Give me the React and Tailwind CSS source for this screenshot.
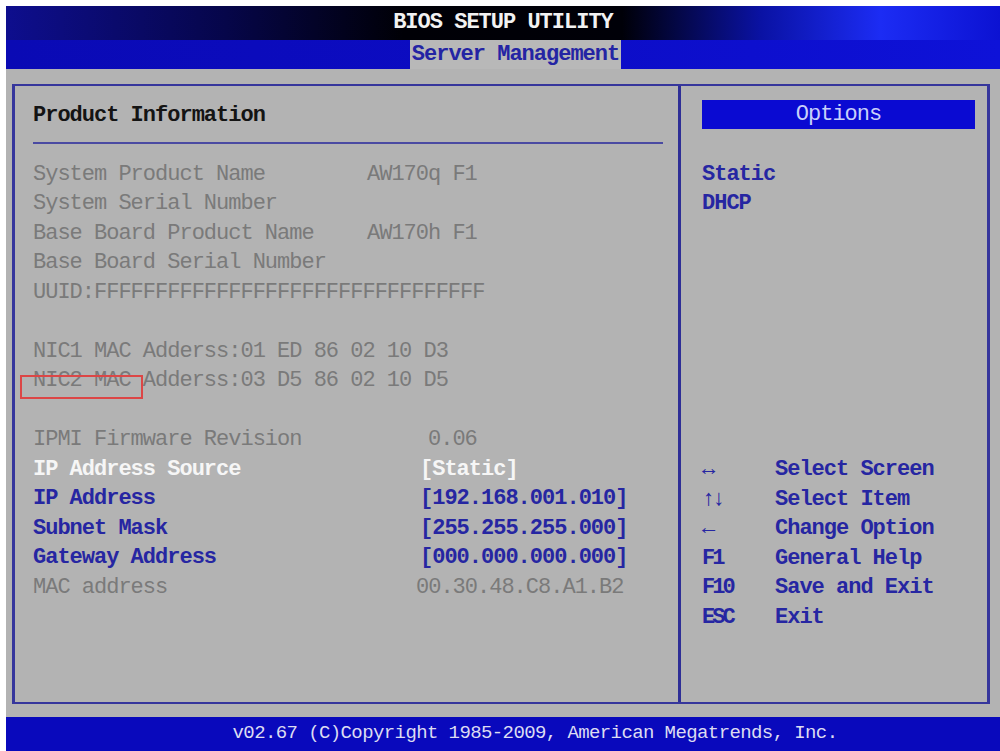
import React from "react";

const mono = { fontFamily: '"Liberation Mono", "DejaVu Sans Mono", monospace' };

const infoRows = [
  { label: "System Product Name", value: "AW170q F1" },
  { label: "System Serial Number", value: "" },
  { label: "Base Board Product Name", value: "AW170h F1" },
  { label: "Base Board Serial Number", value: "" },
  { label: "UUID:FFFFFFFFFFFFFFFFFFFFFFFFFFFFFFFF", value: "" },
];

const ipmiRows = [
  { label: "IPMI Firmware Revision", value: "0.06", tone: "gray", shift: "pl-[8px]" },
  { label: "IP Address Source", value: "[Static]", tone: "white" },
  { label: "IP Address", value: "[192.168.001.010]", tone: "blue" },
  { label: "Subnet Mask", value: "[255.255.255.000]", tone: "blue" },
  { label: "Gateway Address", value: "[000.000.000.000]", tone: "blue" },
  { label: "MAC address", value: "00.30.48.C8.A1.B2", tone: "gray", shift: "-ml-[4px]" },
];

const helpRows = [
  { key: "↔", desc: "Select Screen" },
  { key: "↑↓", desc: "Select Item" },
  { key: "←", desc: "Change Option" },
  { key: "F1", desc: "General Help" },
  { key: "F10", desc: "Save and Exit" },
  { key: "ESC", desc: "Exit" },
];

const toneClass = {
  gray: "text-[#7a7a7a]",
  white: "text-[#f6f6f6] font-bold",
  blue: "text-[#2626a2] font-bold",
};

const App = () => {
  return (
    <div
      className="relative w-[1000px] h-[751px] overflow-hidden bg-white pl-[6px] pt-[6px] text-[22px] tracking-[-1px] leading-[29.5px]"
      style={mono}
    >
      {/* header */}
      <div className="h-[34px] flex items-center justify-center bg-[linear-gradient(90deg,#0e0e8e_0%,#06064a_22%,#000006_40%,#000008_62%,#0a12a4_76%,#1c2cf4_88%,#0c12d2_100%)]">
        <span className="text-[#f2f2f2] font-bold">BIOS SETUP UTILITY</span>
      </div>
      <div className="h-[29px] flex bg-[linear-gradient(90deg,#0a0ab4_0%,#0c0cc4_50%,#0e12d8_100%)] pl-[404px]">
        <div className="h-full w-[211px] bg-[#b8b8b8] flex items-center justify-center">
          <span className="text-[#2424a4] font-bold">Server Management</span>
        </div>
      </div>

      {/* body */}
      <div className="h-[648px] bg-[#b3b3b3] pl-[6px] pr-[10px] pt-[15px] pb-[13px] flex flex-col">
        <div className="flex-1 flex border-y-2 border-l-[3px] border-r-[3px] border-[#36369c]">
          {/* left column */}
          <div className="w-[666px] border-r-[3px] border-[#2e2e96] pl-[18px] pt-[15px]">
            <div className="text-[#141414] font-bold">Product Information</div>
            <div className="mt-[11px] h-[2px] w-[630px] bg-[#4a4aa2]" />
            <div className="mt-[16px]">
              {infoRows.map((r) => (
                <div key={r.label} className="flex text-[#7a7a7a] whitespace-pre">
                  <span className="w-[334px] shrink-0">{r.label}</span>
                  <span>{r.value}</span>
                </div>
              ))}
              <div className="h-[29.5px]" />
              <div className="text-[#7a7a7a] whitespace-pre">NIC1 MAC Adderss:01 ED 86 02 10 D3</div>
              <div className="text-[#7a7a7a] whitespace-pre">NIC2 MAC Adderss:03 D5 86 02 10 D5</div>
              <div className="h-[29.5px]" />
              {ipmiRows.map((r) => (
                <div key={r.label} className="flex whitespace-pre">
                  <span className={`w-[387px] shrink-0 ${toneClass[r.tone]}`}>{r.label}</span>
                  <span className={`${toneClass[r.tone]} ${r.shift || ""}`}>{r.value}</span>
                </div>
              ))}
            </div>
          </div>

          {/* right column */}
          <div className="flex-1 pl-[21px] pr-[12px] pt-[14px]">
            <div className="h-[29px] bg-[#0a0ad2] flex items-center justify-center">
              <span className="text-[#c8d0fa]">Options</span>
            </div>
            <div className="mt-[30.5px] text-[#2626a2] font-bold">Static</div>
            <div className="text-[#2626a2] font-bold">DHCP</div>
            <div className="mt-[236.5px]">
              {helpRows.map((h) => (
                <div key={h.desc} className="flex text-[#2626a2] font-bold">
                  <span className="w-[73px] shrink-0 tracking-[-3px]">{h.key}</span>
                  <span>{h.desc}</span>
                </div>
              ))}
            </div>
          </div>
        </div>
      </div>

      {/* footer */}
      <div className="h-[34px] bg-[#0909bc] flex items-center justify-center pl-[64px] text-[19px] tracking-[-0.6px]">
        <span className="text-[#dcdcf2]">v02.67 (C)Copyright 1985-2009, American Megatrends, Inc.</span>
      </div>

      {/* annotation box */}
      <div className="absolute left-[20px] top-[375px] w-[123px] h-[24px] border-2 border-[#dc4646]" />
    </div>
  );
};

export default App;
